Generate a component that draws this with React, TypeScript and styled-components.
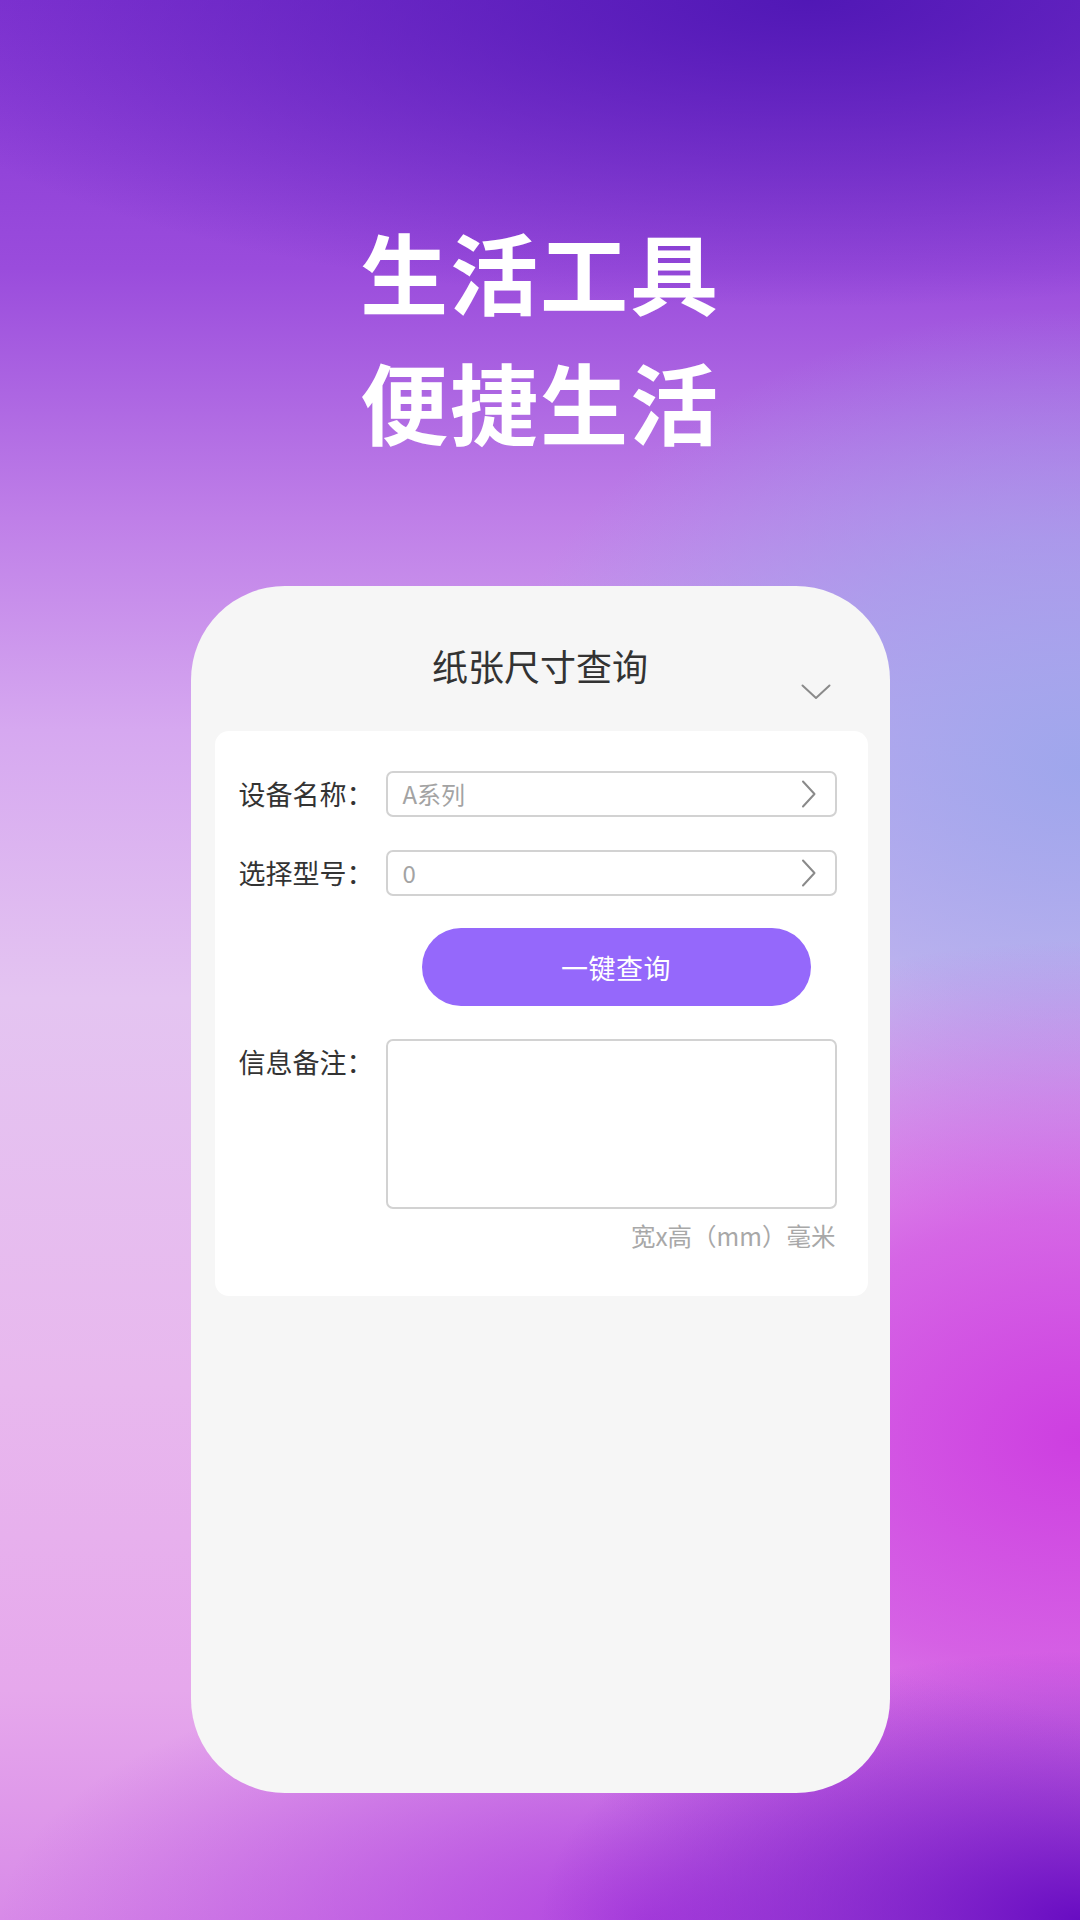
import React from "react";
import styled, { createGlobalStyle } from "styled-components";

const Global = createGlobalStyle`
  html, body { margin: 0; padding: 0; }
  body { font-family: "Noto Sans CJK SC", "Noto Sans", sans-serif; }
  * { box-sizing: border-box; }
`;

const Page = styled.div`
  width: 1080px;
  height: 1920px;
  overflow: hidden;
  display: flex;
  flex-direction: column;
  align-items: center;
  padding-top: 205px;
  background:
    radial-gradient(50% 14% at 100% 100%, rgba(104, 12, 194, 1) 0%, rgba(104, 12, 194, 0) 100%),
    radial-gradient(60% 14% at 60% 100%, rgba(170, 56, 222, 0.85) 0%, rgba(170, 56, 222, 0) 100%),
    radial-gradient(65% 26% at 100% 75%, rgba(204, 56, 224, 0.95) 0%, rgba(204, 56, 224, 0.65) 45%, rgba(204, 56, 224, 0) 100%),
    radial-gradient(55% 24% at 100% 40%, rgba(156, 166, 236, 0.95) 0%, rgba(156, 166, 236, 0.6) 50%, rgba(156, 166, 236, 0) 100%),
    radial-gradient(90% 16% at 75% 0%, rgba(78, 22, 180, 0.95) 0%, rgba(78, 22, 180, 0) 100%),
    linear-gradient(180deg, #8436d4 0%, #9a4cdc 14%, #bf7fe8 27%, #d6a8f0 38%, #e4c4f1 52%, #e8b8ee 72%, #e6a8ec 88%, #d88ae8 100%);
`;

const Headline = styled.h1`
  margin: 0;
  font-family: "Noto Sans CJK SC", sans-serif;
  font-weight: 700;
  font-size: 88px;
  line-height: 130px;
  letter-spacing: 2px;
  color: #ffffff;
  text-align: center;
`;

const Card = styled.div`
  margin-top: 121px;
  width: 699px;
  height: 1207px;
  background: #f6f6f6;
  border-radius: 94px;
  display: flex;
  flex-direction: column;
`;

const Header = styled.div`
  height: 145px;
  padding: 54px 59px 0 59px;
  display: grid;
  grid-template-columns: 1fr auto 1fr;
  align-items: start;
`;

const Title = styled.div`
  grid-column: 2;
  font-size: 36px;
  line-height: 50px;
  font-weight: 400;
  color: #333333;
`;

const HeaderChevron = styled.svg`
  grid-column: 3;
  justify-self: end;
  margin-top: 44px;
`;

const Panel = styled.div`
  margin: 0 22px 0 24px;
  background: #ffffff;
  border-radius: 14px;
  height: 565px;
  padding: 40px 31px 0 24px;
  display: flex;
  flex-direction: column;
`;

const Row = styled.div<{ $top?: boolean; $gap?: number }>`
  display: flex;
  align-items: ${(p) => (p.$top ? "flex-start" : "center")};
  margin-top: ${(p) => p.$gap ?? 0}px;
`;

const Label = styled.div`
  width: 147px;
  flex-shrink: 0;
  font-size: 27px;
  line-height: 46px;
  color: #333333;
  white-space: nowrap;
`;

const Select = styled.div`
  flex: 1;
  height: 46px;
  border: 2px solid #d2d2d2;
  border-radius: 7px;
  display: flex;
  align-items: center;
  justify-content: space-between;
  padding: 0 18px 0 15px;
`;

const Placeholder = styled.span`
  font-size: 24px;
  color: #a3a3a3;
  line-height: 1;
`;

const ButtonRow = styled.div`
  display: flex;
  margin-top: 32px;
  padding-left: 183px;
`;

const QueryButton = styled.button`
  width: 389px;
  height: 78px;
  border: none;
  border-radius: 39px;
  background: #9568fb;
  color: #ffffff;
  font-family: "Noto Sans CJK SC", sans-serif;
  font-size: 27px;
  letter-spacing: 0.5px;
  cursor: pointer;
`;

const TextArea = styled.div`
  flex: 1;
  height: 170px;
  border: 2px solid #d2d2d2;
  border-radius: 7px;
  background: #ffffff;
`;

const Hint = styled.div`
  margin-top: 12px;
  text-align: right;
  font-size: 24.5px;
  line-height: 30px;
  color: #a8a8a8;
  padding-right: 1px;
`;

const ChevronRight = () => (
  <svg width="16" height="28" viewBox="0 0 16 28" fill="none">
    <path d="M2 1.5 L13.5 14 L2 26.5" stroke="#8a8a8a" strokeWidth="2" strokeLinecap="round" strokeLinejoin="round" />
  </svg>
);

export default function App() {
  return (
    <>
      <Global />
      <Page>
        <Headline>
          生活工具
          <br />
          便捷生活
        </Headline>
        <Card>
          <Header>
            <Title>纸张尺寸查询</Title>
            <HeaderChevron width="30" height="16" viewBox="0 0 30 16" fill="none">
              <path d="M1.5 1.5 L15 14 L28.5 1.5" stroke="#8a8a8a" strokeWidth="2" strokeLinecap="round" strokeLinejoin="round" />
            </HeaderChevron>
          </Header>
          <Panel>
            <Row>
              <Label>设备名称：</Label>
              <Select>
                <Placeholder>A系列</Placeholder>
                <ChevronRight />
              </Select>
            </Row>
            <Row $gap={33}>
              <Label>选择型号：</Label>
              <Select>
                <Placeholder>0</Placeholder>
                <ChevronRight />
              </Select>
            </Row>
            <ButtonRow>
              <QueryButton>一键查询</QueryButton>
            </ButtonRow>
            <Row $top $gap={33}>
              <Label>信息备注：</Label>
              <TextArea />
            </Row>
            <Hint>宽x高（mm）毫米</Hint>
          </Panel>
        </Card>
      </Page>
    </>
  );
}
